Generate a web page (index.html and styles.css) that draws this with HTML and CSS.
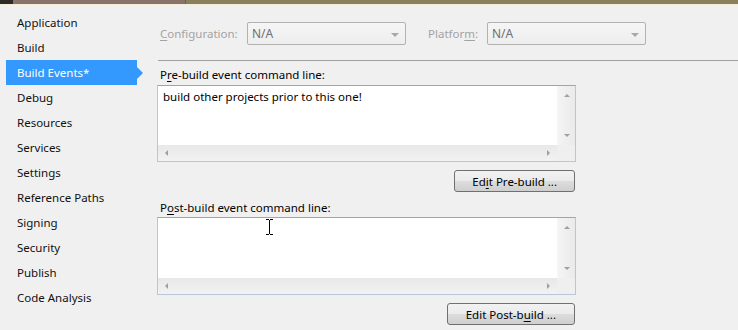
FILE: index.html
```html
<!DOCTYPE html>
<html lang="en">
<head>
    <meta charset="UTF-8">
    <title>Project Properties - Build Events</title>
    <link rel="stylesheet" href="styles.css">
</head>
<body>

    <!-- Strip of the document tab well above the designer -->
    <div class="title-strip">
        <span class="seg seg-dark"></span>
        <span class="seg seg-mauve"></span>
        <span class="seg seg-olive"></span>
    </div>

    <div class="page">
        <!-- Property page tabs -->
        <nav class="tabs">
            <div class="tab">Application</div>
            <div class="tab">Build</div>
            <div class="tab active">Build Events*</div>
            <div class="tab">Debug</div>
            <div class="tab">Resources</div>
            <div class="tab">Services</div>
            <div class="tab">Settings</div>
            <div class="tab">Reference Paths</div>
            <div class="tab">Signing</div>
            <div class="tab">Security</div>
            <div class="tab">Publish</div>
            <div class="tab">Code Analysis</div>
        </nav>

        <main class="panel">
            <div class="config-row">
                <span class="config-label"><u>C</u>onfiguration:</span>
                <div class="combo">N/A<span class="caret"></span></div>
                <span class="config-label platform-label">Platfor<u>m</u>:</span>
                <div class="combo">N/A<span class="caret"></span></div>
            </div>

            <div class="separator"></div>

            <!-- Pre-build -->
            <div class="event-label">P<u>r</u>e-build event command line:</div>
            <div class="cmdbox">
                <div class="cmd-text">build other projects prior to this one!</div>
                <div class="vscroll">
                    <span class="arrow arrow-up"></span>
                    <span class="arrow arrow-down"></span>
                </div>
                <div class="hscroll">
                    <span class="arrow arrow-left"></span>
                    <span class="arrow arrow-right"></span>
                </div>
                <div class="corner"></div>
            </div>
            <div class="btn-row">
                <button class="edit-btn pre-btn">Ed<u>i</u>t Pre-build ...</button>
            </div>

            <!-- Post-build -->
            <div class="event-label post-label">P<u>o</u>st-build event command line:</div>
            <div class="cmdbox post-box">
                <div class="cmd-text"></div>
                <div class="vscroll">
                    <span class="arrow arrow-up"></span>
                    <span class="arrow arrow-down"></span>
                </div>
                <div class="hscroll">
                    <span class="arrow arrow-left"></span>
                    <span class="arrow arrow-right"></span>
                </div>
                <div class="corner"></div>

                <!-- Mouse I-beam hovering over the box -->
                <svg class="ibeam" width="9" height="16" viewBox="0 0 9 16">
                    <path d="M1 0.5h3M5 0.5h3M4.5 1v14M1 15.5h3M5 15.5h3" stroke="#000" stroke-width="1" fill="none"/>
                </svg>
            </div>
            <div class="btn-row">
                <button class="edit-btn">Edit Post-b<u>u</u>ild ...</button>
            </div>
        </main>
    </div>

</body>
</html>
```
FILE: styles.css
```css
/* General Page Styling */
body {
    font-family: "Noto Sans", "Open Sans", sans-serif;
    font-size: 11.5px;
    margin: 0;
    padding: 0;
    background: #f0f0f0;
    color: #111111;
    width: 738px;
    height: 330px;
    overflow: hidden;
}

u {
    text-decoration-thickness: 1px;
    text-underline-offset: 2px;
}

/* Top strip */
.title-strip {
    display: flex;
    height: 4px;
    border-bottom: 1px solid #f3edd7;
}

.seg-dark {
    width: 13px;
    background: #2e2a28;
}

.seg-mauve {
    width: 172px;
    background: #8a7469;
    border-right: 1px solid #6a6348;
}

.seg-olive {
    flex: 1;
    background: #8b805c;
}

/* Layout */
.page {
    display: flex;
}

/* Tabs on the left */
.tabs {
    width: 157px;
    flex-shrink: 0;
    padding-top: 5px;
}

.tab {
    height: 25px;
    line-height: 25px;
    margin-left: 6px;
    width: 131px;
    padding-left: 11px;
    box-sizing: border-box;
    position: relative;
    white-space: nowrap;
}

.tab.active {
    background: #3399ff;
    color: #ffffff;
}

/* small pointer on the selected tab */
.tab.active::after {
    content: "";
    position: absolute;
    left: 131px;
    top: 7px;
    border-left: 6px solid #3399ff;
    border-top: 6px solid transparent;
    border-bottom: 6px solid transparent;
}

/* Main panel */
.panel {
    flex: 1;
    padding-top: 17px;
}

.config-row {
    display: flex;
    align-items: center;
    padding-left: 3px;
    height: 23px;
}

.config-label {
    width: 87px;
    color: #a3a3a3;
}

.platform-label {
    width: 59px;
    margin-left: 22px;
}

.combo {
    position: relative;
    width: 159px;
    height: 23px;
    line-height: 21px;
    box-sizing: border-box;
    border: 1px solid #b2b2b2;
    border-radius: 2px;
    background: linear-gradient(#f5f5f5, #eeeeee);
    color: #6f6f6f;
    font-size: 12px;
    padding-left: 4px;
}

.caret {
    position: absolute;
    right: 6px;
    top: 10px;
    border-top: 4px solid #a8a8a8;
    border-left: 4px solid transparent;
    border-right: 4px solid transparent;
}

.separator {
    margin: 15px 0 0 1px;
    height: 1px;
    background: #a0a0a0;
}

/* Command line boxes */
.event-label {
    margin-top: 6px;
    padding-left: 3px;
    height: 18px;
    line-height: 15px;
    color: #000000;
}

.post-label {
    margin-top: 8px;
    height: 17px;
}

.cmdbox {
    position: relative;
    width: 419px;
    height: 77px;
    box-sizing: border-box;
    border: 1px solid #b7c7d7;
    border-top-color: #8fa9c2;
    display: grid;
    grid-template-columns: 1fr 18px;
    grid-template-rows: 1fr 16px;
    background: #ffffff;
}

.post-box {
    height: 78px;
}

.cmd-text {
    padding: 3px 5px;
    line-height: 15px;
    color: #000000;
}

.vscroll {
    position: relative;
    background: linear-gradient(90deg, #f4f4f4, #eaeaea);
    border-left: 1px solid #f7f7f7;
}

.hscroll {
    position: relative;
    background: linear-gradient(#e8e8e8, #f2f2f2);
}

.corner {
    background: #efefef;
}

.arrow {
    position: absolute;
    width: 0;
    height: 0;
}

.arrow-up {
    left: 6px;
    top: 8px;
    border-bottom: 3px solid #a0a0a0;
    border-left: 3px solid transparent;
    border-right: 3px solid transparent;
}

.arrow-down {
    left: 6px;
    bottom: 8px;
    border-top: 3px solid #a0a0a0;
    border-left: 3px solid transparent;
    border-right: 3px solid transparent;
}

.arrow-left {
    left: 7px;
    top: 5px;
    border-right: 3px solid #a0a0a0;
    border-top: 3px solid transparent;
    border-bottom: 3px solid transparent;
}

.arrow-right {
    right: 7px;
    top: 5px;
    border-left: 3px solid #a0a0a0;
    border-top: 3px solid transparent;
    border-bottom: 3px solid transparent;
}

.ibeam {
    position: absolute;
    left: 107px;
    top: 1px;
}

/* Buttons */
.btn-row {
    width: 419px;
    display: flex;
    justify-content: flex-end;
    margin-top: 8px;
}

.edit-btn {
    font-family: inherit;
    font-size: 11.5px;
    height: 22px;
    padding: 0 18px;
    margin-right: 1px;
    border: 1px solid #707070;
    border-radius: 3px;
    background: linear-gradient(#f2f2f2 0%, #ebebeb 50%, #dddddd 51%, #cfcfcf 100%);
    color: #000000;
    cursor: pointer;
}

.pre-btn {
    padding: 0 17px;
}
```
